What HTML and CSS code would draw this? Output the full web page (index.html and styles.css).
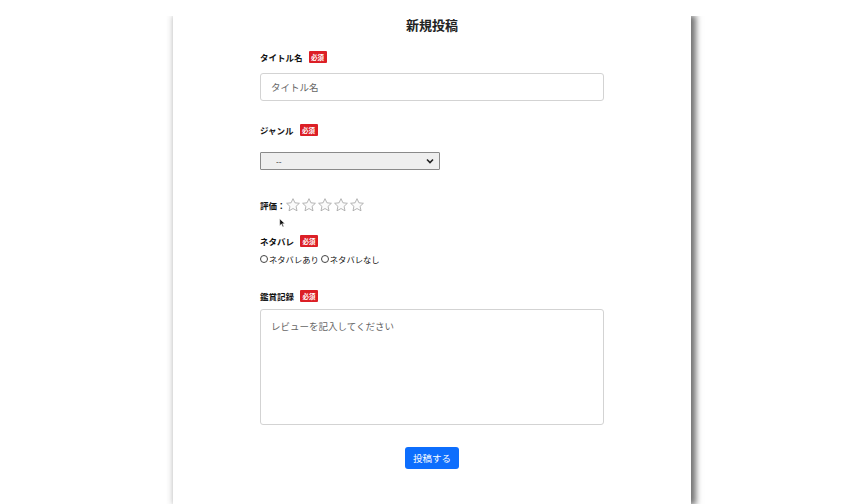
FILE: index.html
```html
<!DOCTYPE html>
<html lang="ja">
<head>
<meta charset="utf-8">
<title>新規投稿</title>
<link rel="stylesheet" href="styles.css">
</head>
<body>
<div class="page">
  <main class="panel">
    <h1 class="title">新規投稿</h1>
    <form class="form">
      <div class="label-row lr-title"><span class="label">タイトル名</span><span class="badge">必須</span></div>
      <input class="text-input" type="text" placeholder="タイトル名">

      <div class="label-row lr-genre"><span class="label">ジャンル</span><span class="badge">必須</span></div>
      <select class="select"><option>--</option></select>

      <div class="rating">
        <span class="label rating-label">評価：</span>
        <span class="stars">
          <svg class="star" viewBox="0 0 24 24"><path d="M12 2.5l2.9 6.2 6.7.7-5 4.6 1.4 6.7L12 17.3l-6 3.4 1.4-6.7-5-4.6 6.7-.7z"/></svg>
          <svg class="star" viewBox="0 0 24 24"><path d="M12 2.5l2.9 6.2 6.7.7-5 4.6 1.4 6.7L12 17.3l-6 3.4 1.4-6.7-5-4.6 6.7-.7z"/></svg>
          <svg class="star" viewBox="0 0 24 24"><path d="M12 2.5l2.9 6.2 6.7.7-5 4.6 1.4 6.7L12 17.3l-6 3.4 1.4-6.7-5-4.6 6.7-.7z"/></svg>
          <svg class="star" viewBox="0 0 24 24"><path d="M12 2.5l2.9 6.2 6.7.7-5 4.6 1.4 6.7L12 17.3l-6 3.4 1.4-6.7-5-4.6 6.7-.7z"/></svg>
          <svg class="star" viewBox="0 0 24 24"><path d="M12 2.5l2.9 6.2 6.7.7-5 4.6 1.4 6.7L12 17.3l-6 3.4 1.4-6.7-5-4.6 6.7-.7z"/></svg>
        </span>
        <svg class="cursor" viewBox="0 0 10 14"><path d="M1 1v10l2.5-2.4 1.8 4.2 1.6-.7-1.8-4.1H8.5z" fill="#111" stroke="#fff" stroke-width="0.8"/></svg>
      </div>

      <div class="label-row lr-spoiler"><span class="label">ネタバレ</span><span class="badge">必須</span></div>
      <div class="radios">
        <label class="radio"><input type="radio" name="spoiler"><span>ネタバレあり</span></label>
        <label class="radio"><input type="radio" name="spoiler"><span>ネタバレなし</span></label>
      </div>

      <div class="label-row lr-record"><span class="label">鑑賞記録</span><span class="badge">必須</span></div>
      <textarea class="textarea" placeholder="レビューを記入してください"></textarea>

      <div class="actions"><button type="button" class="submit">投稿する</button></div>
    </form>
  </main>
</div>
</body>
</html>
```

FILE: styles.css
```css
* { box-sizing: border-box; }
html, body { margin: 0; padding: 0; background: #fff; }
body {
  font-family: "Noto Sans CJK JP", "Noto Sans", sans-serif;
  color: #111;
  overflow: hidden;
  height: 100vh;
}
.page { padding-top: 16px; height: 100vh; }
.panel {
  width: 518px;
  height: 100%;
  margin: 0 auto;
  background: #fff;
  box-shadow: 4px 0 6px 1px rgba(0,0,0,0.55), -3px 0 5px rgba(0,0,0,0.08);
  clip-path: inset(0 -20px 0 -20px);
  display: flex;
  flex-direction: column;
  align-items: center;
}
.title {
  margin: 0;
  font-size: 13px;
  line-height: 18px;
  font-weight: 700;
  color: #222;
}
.form {
  width: 344px;
  display: flex;
  flex-direction: column;
  align-items: flex-start;
}
.label-row {
  display: flex;
  align-items: center;
  height: 14px;
  gap: 6px;
}
.label {
  font-size: 8.5px;
  font-weight: 700;
  line-height: 14px;
  color: #111;
  white-space: nowrap;
}
.badge {
  display: inline-flex;
  align-items: center;
  justify-content: center;
  width: 18px;
  height: 12px;
  background: #dc1f26;
  color: #fff;
  font-size: 6.5px;
  font-weight: 700;
  border-radius: 1px;
}
.lr-title { margin-top: 16px; }
.lr-genre { margin-top: 22px; }
.lr-spoiler { margin-top: 20px; }
.lr-record { margin-top: 24px; }

.text-input {
  margin-top: 9px;
  width: 344px;
  height: 28px;
  border: 1px solid #d3d3d3;
  border-radius: 3px;
  padding: 0 10px;
  font-family: inherit;
  font-size: 9.5px;
  color: #333;
  outline: none;
}
.text-input::placeholder, .textarea::placeholder { color: #666; }

.select {
  margin-top: 15px;
  width: 180px;
  height: 18px;
  -webkit-appearance: none;
  appearance: none;
  border: 1px solid #8a8a8a;
  border-radius: 1px;
  background-color: #efefef;
  background-image: url("data:image/svg+xml,%3Csvg xmlns='http://www.w3.org/2000/svg' width='8' height='6' viewBox='0 0 8 6'%3E%3Cpath d='M1 1.5l3 3 3-3' fill='none' stroke='%23222' stroke-width='1.6'/%3E%3C/svg%3E");
  background-repeat: no-repeat;
  background-position: right 5px center;
  padding: 0 0 0 15px;
  font-family: inherit;
  font-size: 8px;
  color: #222;
}

.rating {
  position: relative;
  margin-top: 26px;
  display: flex;
  align-items: center;
  height: 18px;
}
.rating-label { width: 25px; flex-shrink: 0; }
.stars { display: flex; flex-shrink: 0; }
.star {
  width: 16px;
  height: 16px;
  fill: #fbfbfb;
  stroke: #a9a9a9;
  stroke-width: 1.3;
  stroke-linejoin: round;
}
.cursor {
  position: absolute;
  left: 19px;
  top: 22px;
  width: 7px;
  height: 10px;
}

.radios {
  margin-top: 5px;
  display: flex;
  align-items: center;
  height: 12px;
  gap: 2px;
}
.radio {
  display: flex;
  align-items: center;
  font-size: 8.3px;
  line-height: 12px;
  color: #111;
}
.radio input {
  -webkit-appearance: none;
  appearance: none;
  width: 8px;
  height: 8px;
  margin: 0 1px 0 0;
  border: 1px solid #444;
  border-radius: 50%;
  background: #fff;
}

.textarea {
  margin-top: 6px;
  width: 344px;
  height: 116px;
  border: 1px solid #d3d3d3;
  border-radius: 3px;
  padding: 8px 10px;
  font-family: inherit;
  font-size: 9.5px;
  line-height: 16px;
  resize: none;
  outline: none;
}

.actions {
  width: 100%;
  display: flex;
  justify-content: center;
  margin-top: 22px;
}
.submit {
  width: 54px;
  height: 22px;
  border: none;
  border-radius: 3px;
  background: #0d6efd;
  color: #fff;
  font-family: inherit;
  font-size: 9.5px;
  padding: 0;
}
```
